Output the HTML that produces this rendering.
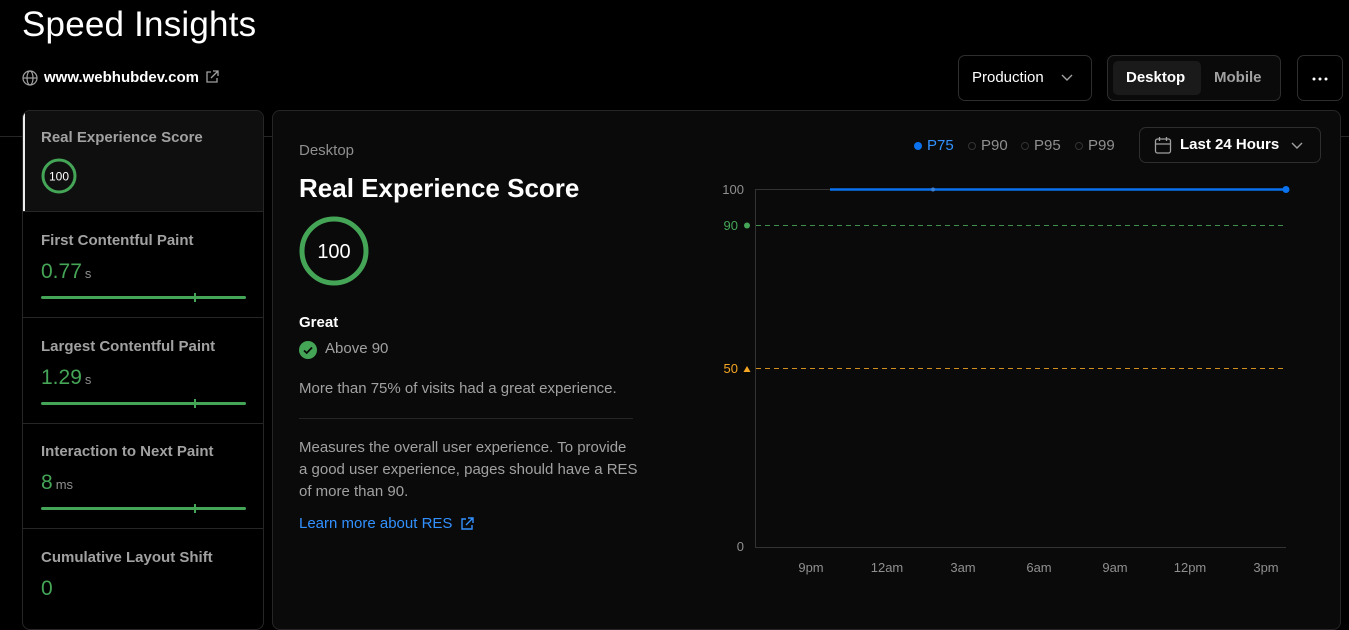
<!DOCTYPE html>
<html><head><meta charset="utf-8"><style>
*{margin:0;padding:0;box-sizing:border-box}
body{width:1349px;height:607px;background:#000;color:#ededed;font-family:"Liberation Sans",sans-serif;position:relative;overflow:hidden}
.a{position:absolute;white-space:nowrap}
.btn{position:absolute;border:1px solid #2e2e2e;border-radius:7px;background:#000}
.item{position:absolute;left:22px;width:242px;border-top:1px solid #262626}
.lab{position:absolute;left:19px;font-size:15px;font-weight:bold;color:#a1a1a1}
.val{position:absolute;left:19px;font-size:21px;color:#45a557}
.val small{font-size:13px;color:#8f8f8f;margin-left:3px}
.bar{position:absolute;left:19px;width:205px;height:3px;background:#45a557;border-radius:2px}
.bar i{position:absolute;left:153px;top:-3px;width:2px;height:9px;background:#45a557}
</style></head><body>
<div class="a" style="left:22px;top:5px;font-size:35px;color:#fff;letter-spacing:0.2px">Speed Insights</div>
<svg class="a" style="left:22px;top:70px" width="16" height="16" viewBox="0 0 16 16" fill="none" stroke="#a1a1a1" stroke-width="1.2"><circle cx="8" cy="8" r="7"/><ellipse cx="8" cy="8" rx="3" ry="7"/><path d="M1 8h14"/></svg>
<div class="a" style="left:44px;top:69px;font-size:15px;font-weight:bold;color:#fff">www.webhubdev.com</div>
<svg class="a" style="left:205px;top:70px" width="14" height="14" viewBox="0 0 14 14" fill="none" stroke="#a1a1a1" stroke-width="1.3"><path d="M6 2H2v10h10V8M8 1h5v5M13 1L6 8"/></svg>
<div class="a" style="left:0;top:136px;width:1349px;height:1px;background:#262626"></div>

<div class="btn" style="left:958px;top:55px;width:134px;height:46px"><span class="a" style="left:13px;top:13px;font-size:15px;color:#fff">Production</span><svg class="a" style="left:102px;top:18px" width="12" height="8" viewBox="0 0 12 8" fill="none" stroke="#a1a1a1" stroke-width="1.4"><path d="M1 1l5 5 5-5"/></svg></div>
<div class="btn" style="left:1107px;top:55px;width:174px;height:46px;background:#0a0a0a"><div class="a" style="left:5px;top:5px;width:88px;height:34px;background:#1a1a1a;border-radius:5px"></div><span class="a" style="left:18px;top:13px;font-size:15px;font-weight:bold;color:#fff">Desktop</span><span class="a" style="left:106px;top:13px;font-size:15px;font-weight:bold;color:#a1a1a1">Mobile</span></div>
<div class="btn" style="left:1297px;top:55px;width:46px;height:46px"><svg class="a" style="left:14px;top:21px" width="16" height="4"><circle cx="2" cy="2" r="1.5" fill="#fff"/><circle cx="8" cy="2" r="1.5" fill="#fff"/><circle cx="14" cy="2" r="1.5" fill="#fff"/></svg></div>

<div class="a" style="left:22px;top:110px;width:242px;height:520px;border:1px solid #262626;border-radius:8px;background:#000;overflow:hidden">
<div class="a" style="left:0;top:0;width:242px;height:101px;background:#0f0f0f;border-left:2px solid #ededed"></div>
</div>
<div class="item" style="top:110px;border:none;height:101px"><div class="lab" style="top:19px">Real Experience Score</div>
<svg class="a" style="left:19px;top:48px" width="36" height="36"><circle cx="18" cy="18" r="16" fill="none" stroke="#45a557" stroke-width="3"/><text x="18" y="22.5" text-anchor="middle" font-size="12" fill="#fff" font-family="Liberation Sans">100</text></svg></div>
<div class="item" style="top:211px;height:106px"><div class="lab" style="top:20px">First Contentful Paint</div><div class="val" style="top:48px">0.77<small>s</small></div><div class="bar" style="top:84px"><i></i></div></div>
<div class="item" style="top:317px;height:106px"><div class="lab" style="top:20px">Largest Contentful Paint</div><div class="val" style="top:48px">1.29<small>s</small></div><div class="bar" style="top:84px"><i></i></div></div>
<div class="item" style="top:423px;height:105px"><div class="lab" style="top:19px">Interaction to Next Paint</div><div class="val" style="top:47px">8<small>ms</small></div><div class="bar" style="top:83px"><i></i></div></div>
<div class="item" style="top:528px;height:90px"><div class="lab" style="top:20px">Cumulative Layout Shift</div><div class="val" style="top:48px">0</div></div>

<div class="a" style="left:272px;top:110px;width:1069px;height:520px;border:1px solid #262626;border-radius:8px;background:#0a0a0a"></div>
<div class="a" style="left:299px;top:142px;font-size:15px;color:#8f8f8f">Desktop</div>
<div class="a" style="left:299px;top:173px;font-size:26px;font-weight:bold;color:#fff">Real Experience Score</div>
<svg class="a" style="left:298px;top:215px" width="72" height="72"><circle cx="36" cy="36" r="32" fill="none" stroke="#45a557" stroke-width="5"/><text x="36" y="43" text-anchor="middle" font-size="20" fill="#fff" font-family="Liberation Sans">100</text></svg>
<div class="a" style="left:299px;top:314px;font-size:15px;font-weight:bold;color:#fff">Great</div>
<svg class="a" style="left:299px;top:341px" width="18" height="18"><circle cx="9" cy="9" r="9" fill="#45a557"/><path d="M5 9.5l2.7 2.5L13 6.5" fill="none" stroke="#0a0a0a" stroke-width="1.8"/></svg>
<div class="a" style="left:325px;top:340px;font-size:15px;color:#a1a1a1">Above 90</div>
<div class="a" style="left:299px;top:380px;font-size:15px;color:#a1a1a1">More than 75% of visits had a great experience.</div>
<div class="a" style="left:299px;top:418px;width:334px;height:1px;background:#262626"></div>
<div class="a" style="left:299px;top:437px;font-size:15px;line-height:22px;color:#a1a1a1;white-space:normal;width:370px">Measures the overall user experience. To provide<br>a good user experience, pages should have a RES<br>of more than 90.</div>
<div class="a" style="left:299px;top:515px;font-size:15px;color:#3291ff">Learn more about RES</div>
<svg class="a" style="left:460px;top:517px" width="14" height="14" viewBox="0 0 14 14" fill="none" stroke="#3291ff" stroke-width="1.4"><path d="M6 2H2v10h10V8M8 1h5v5M13 1L6 8"/></svg>

<svg class="a" style="left:912px;top:139px" width="220" height="14"><circle cx="6" cy="7" r="4" fill="#0a72ef"/><circle cx="60" cy="7" r="3.5" fill="none" stroke="#333"/><circle cx="113" cy="7" r="3.5" fill="none" stroke="#333"/><circle cx="167" cy="7" r="3.5" fill="none" stroke="#333"/></svg>
<div class="a" style="left:927px;top:137px;font-size:15px;color:#3291ff">P75</div>
<div class="a" style="left:981px;top:137px;font-size:15px;color:#8f8f8f">P90</div>
<div class="a" style="left:1034px;top:137px;font-size:15px;color:#8f8f8f">P95</div>
<div class="a" style="left:1088px;top:137px;font-size:15px;color:#8f8f8f">P99</div>
<div class="btn" style="left:1139px;top:127px;width:182px;height:36px;background:#0a0a0a"><svg class="a" style="left:14px;top:8px" width="18" height="19" viewBox="0 0 18 19" fill="none" stroke="#a1a1a1" stroke-width="1.3"><rect x="1.5" y="3" width="15" height="14" rx="2"/><path d="M1.5 8h15M5.5 1v4M12.5 1v4"/></svg><span class="a" style="left:40px;top:8px;font-size:15px;font-weight:bold;color:#fff">Last 24 Hours</span><svg class="a" style="left:151px;top:14px" width="12" height="8" viewBox="0 0 12 8" fill="none" stroke="#a1a1a1" stroke-width="1.4"><path d="M1 1l5 5 5-5"/></svg></div>

<svg class="a" style="left:700px;top:170px" width="640" height="420" font-family="Liberation Sans" font-size="13">
<path d="M55.5 19V377.5H586" stroke="#333" fill="none"/>
<path d="M55.5 19.5H586" stroke="#333"/>
<path d="M56 55.5H586" stroke="#3f8f4f" stroke-dasharray="5 4"/>
<path d="M56 198.5H586" stroke="#f5a623" stroke-dasharray="5 4" opacity=".85"/>
<path d="M130 19.5H586" stroke="#0a72ef" stroke-width="2.5"/>
<circle cx="586" cy="19.5" r="3.5" fill="#0a72ef"/>
<circle cx="233" cy="19.5" r="2" fill="#3d7fd1"/>
<text x="44" y="24" text-anchor="end" fill="#8f8f8f">100</text>
<text x="38" y="60" text-anchor="end" fill="#45a557">90</text><circle cx="47" cy="55.5" r="3" fill="#45a557"/>
<text x="38" y="203" text-anchor="end" fill="#f5a623">50</text><path d="M43.5 202h7l-3.5-6z" fill="#f5a623"/>
<text x="44" y="381" text-anchor="end" fill="#8f8f8f">0</text>
<g fill="#8f8f8f" text-anchor="middle"><text x="111" y="402">9pm</text><text x="187" y="402">12am</text><text x="263" y="402">3am</text><text x="339" y="402">6am</text><text x="415" y="402">9am</text><text x="490" y="402">12pm</text><text x="566" y="402">3pm</text></g>
</svg>
</body></html>
